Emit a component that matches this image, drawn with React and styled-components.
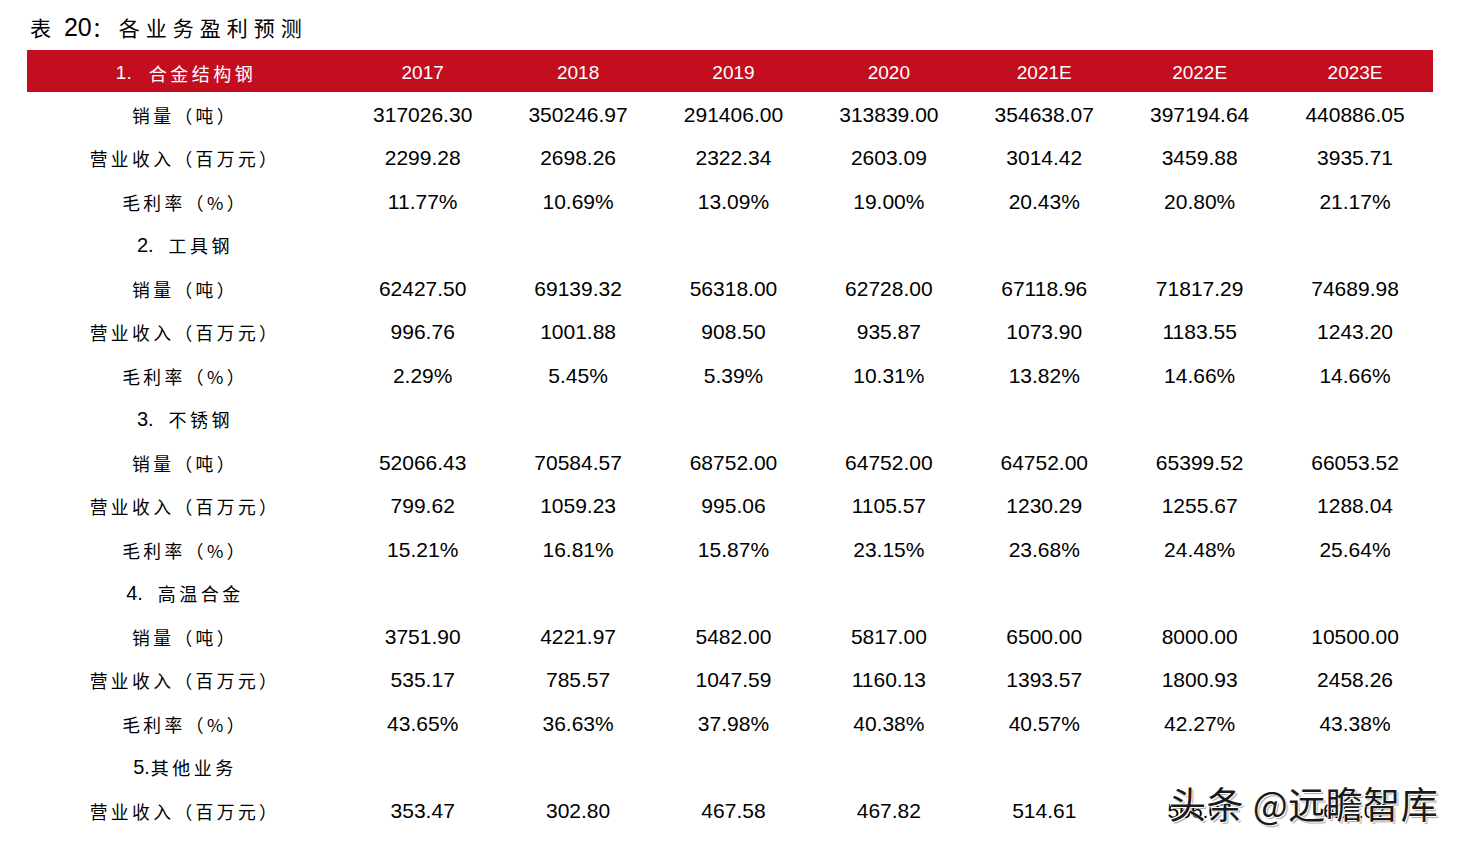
import React from 'react';
import styled, { createGlobalStyle } from 'styled-components';

const GlobalStyle = createGlobalStyle`
    body {
        margin: 0;
        background: #fff;
        font-family: "Liberation Sans", "Noto Sans CJK SC", sans-serif;
        color: #000;
    }
`

const years = ['2017', '2018', '2019', '2020', '2021E', '2022E', '2023E'];

const sections = [
    {
        title: ['1.', '合金结构钢'],
        rows: [
            ['销量（吨）', ['317026.30', '350246.97', '291406.00', '313839.00', '354638.07', '397194.64', '440886.05']],
            ['营业收入（百万元）', ['2299.28', '2698.26', '2322.34', '2603.09', '3014.42', '3459.88', '3935.71']],
            ['毛利率（%）', ['11.77%', '10.69%', '13.09%', '19.00%', '20.43%', '20.80%', '21.17%']],
        ],
    },
    {
        title: ['2.', '工具钢'],
        rows: [
            ['销量（吨）', ['62427.50', '69139.32', '56318.00', '62728.00', '67118.96', '71817.29', '74689.98']],
            ['营业收入（百万元）', ['996.76', '1001.88', '908.50', '935.87', '1073.90', '1183.55', '1243.20']],
            ['毛利率（%）', ['2.29%', '5.45%', '5.39%', '10.31%', '13.82%', '14.66%', '14.66%']],
        ],
    },
    {
        title: ['3.', '不锈钢'],
        rows: [
            ['销量（吨）', ['52066.43', '70584.57', '68752.00', '64752.00', '64752.00', '65399.52', '66053.52']],
            ['营业收入（百万元）', ['799.62', '1059.23', '995.06', '1105.57', '1230.29', '1255.67', '1288.04']],
            ['毛利率（%）', ['15.21%', '16.81%', '15.87%', '23.15%', '23.68%', '24.48%', '25.64%']],
        ],
    },
    {
        title: ['4.', '高温合金'],
        rows: [
            ['销量（吨）', ['3751.90', '4221.97', '5482.00', '5817.00', '6500.00', '8000.00', '10500.00']],
            ['营业收入（百万元）', ['535.17', '785.57', '1047.59', '1160.13', '1393.57', '1800.93', '2458.26']],
            ['毛利率（%）', ['43.65%', '36.63%', '37.98%', '40.38%', '40.57%', '42.27%', '43.38%']],
        ],
    },
    {
        title: ['5.', '其他业务'],
        tight: true,
        rows: [
            ['营业收入（百万元）', ['353.47', '302.80', '467.58', '467.82', '514.61', '566.07', '622.07']],
        ],
    },
];

const App = () => {
    return (
        <Page>
            <GlobalStyle />
            <Title>
                <TitleCn>表</TitleCn> 20<TitleCn>：各业务盈利预测</TitleCn>
            </Title>
            <HeadRow>
                <HeadCell>
                    <span>1.</span>
                    <HeadCn>合金结构钢</HeadCn>
                </HeadCell>
                {years.map(y => <HeadCell key={y}>{y}</HeadCell>)}
            </HeadRow>
            {sections.map((s, i) => (
                <React.Fragment key={i}>
                    {i > 0 && (
                        <Row>
                            <Label>
                                <span>{s.title[0]}</span>
                                <SectionCn tight={s.tight}>{s.title[1]}</SectionCn>
                            </Label>
                        </Row>
                    )}
                    {s.rows.map(([label, vals], j) => (
                        <Row key={j}>
                            <Label><Cn>{label}</Cn></Label>
                            {vals.map((v, k) => <Cell key={k}>{v}</Cell>)}
                        </Row>
                    ))}
                </React.Fragment>
            ))}
            <Watermark>头条 @远瞻智库</Watermark>
        </Page>
    )
}

export default App;

const Page = styled.div`
    position: relative;
    width: 1406px;
    height: 844px;
    padding-left: 27px;
`

const Title = styled.div`
    height: 50px;
    padding-left: 3px;
    display: flex;
    align-items: center;
    font-size: 25px;
    white-space: pre;
    padding-top: 4px;
    box-sizing: border-box;
`

const TitleCn = styled.span`
    font-family: "Noto Sans CJK SC", sans-serif;
    letter-spacing: 6px;
    font-size: 21px;
`

const Cn = styled.span`
    font-family: "Noto Sans CJK SC", sans-serif;
    letter-spacing: 3.4px;
    font-size: 17.8px;
`

const HeadRow = styled.div`
    display: grid;
    grid-template-columns: 318px repeat(7, 155.4px);
    height: 42px;
    background: #c20e1e;
    color: #fff;
`

const HeadCell = styled.div`
    display: flex;
    align-items: center;
    justify-content: center;
    font-size: 19px;
    padding-top: 3px;
    box-sizing: border-box;
`

const HeadCn = styled.span`
    font-family: "Noto Sans CJK SC", sans-serif;
    font-size: 18px;
    letter-spacing: 3.5px;
    margin-left: 17px;
`

const Row = styled.div`
    display: grid;
    grid-template-columns: 318px repeat(7, 155.4px);
    height: 43.5px;
    padding-top: 2px;
    box-sizing: border-box;
`

const Label = styled.div`
    display: flex;
    align-items: center;
    justify-content: center;
    font-size: 20px;
    padding-right: 2px;
`

const SectionCn = styled.span`
    font-family: "Noto Sans CJK SC", sans-serif;
    font-size: 18px;
    letter-spacing: 3.5px;
    margin-left: ${props => props.tight ? '1px' : '15px'};
`

const Cell = styled.div`
    display: flex;
    align-items: center;
    justify-content: center;
    font-size: 21px;
`

const Watermark = styled.div`
    position: absolute;
    left: 1169px;
    top: 776px;
    font-family: "Noto Sans CJK SC", sans-serif;
    font-size: 37px;
    letter-spacing: 0.5px;
    color: #1a1a1a;
    white-space: nowrap;
    text-shadow: 1px 1px 0 #fff, -1px -1px 0 #fff, 2px 2px 1px rgba(0,0,0,0.35);
`
